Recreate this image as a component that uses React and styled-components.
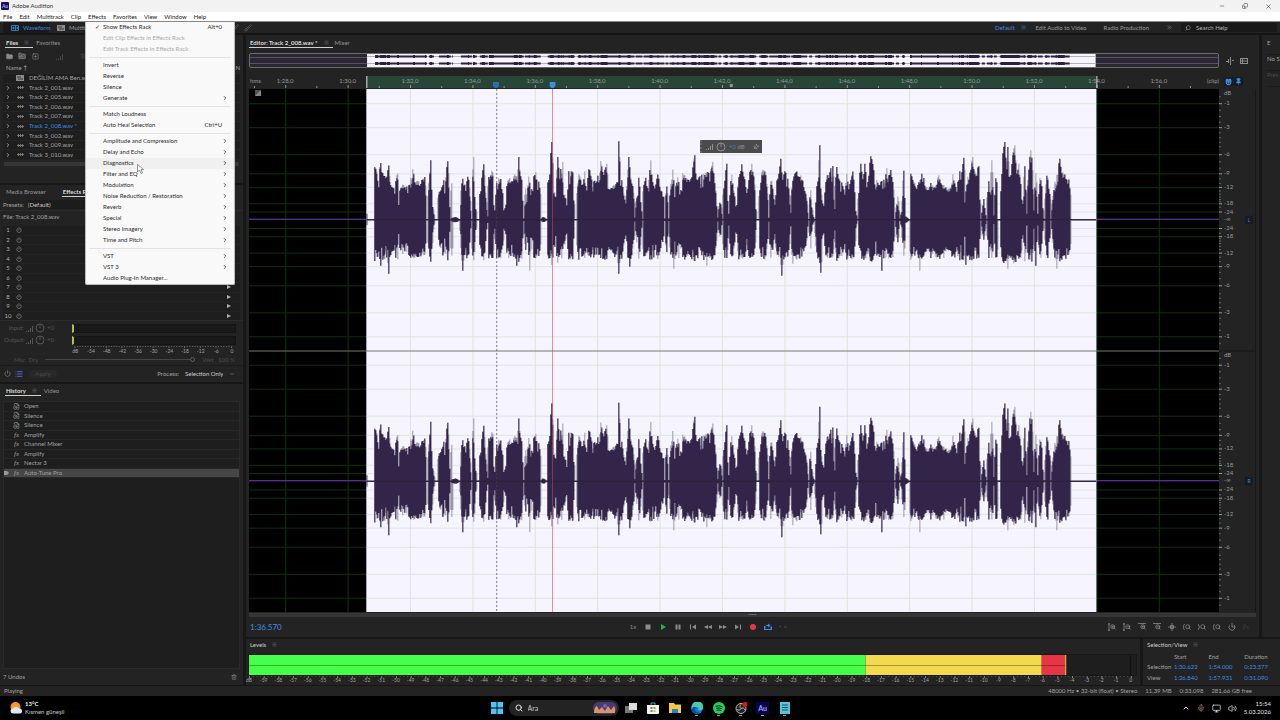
import React from 'react';
import styled, { createGlobalStyle, css } from 'styled-components';
import {
  Folder, FolderInput, SquarePlus, Trash2, ChevronRight, ChevronsRight, ChevronDown, ChevronUp, Power, List, Minus, X, Copy,
  Search, Magnet, Pin, ZoomIn, ZoomOut, Mic, Volume2, Monitor, Brush, FileClock, Menu as MenuIcon,
} from 'lucide-react';

const GlobalStyle = createGlobalStyle`
  * { box-sizing: border-box; }
  html, body { margin: 0; }
  body { background: #232323; font-family: Lato, "Open Sans", sans-serif; font-size: 6px; line-height: 8px; color: #a2a2a2; overflow: hidden; }
  button, input, select { font: inherit; color: inherit; background: none; border: 0; padding: 0; margin: 0; }
  ul, ol { list-style: none; margin: 0; padding: 0; }
  svg { display: block; flex: none; }
`;

/* ---------- frame ---------- */
const Page = styled.div`display: flex; flex-direction: column; height: 100vh; min-height: 640px;`;
const TitleBar = styled.header`display: flex; align-items: center; height: 12px; padding: 0 8px 0 1px; gap: 3px; background: #f2f2f2; color: #333;`;
const AppBadge = styled.span`width: 8px; height: 8px; border-radius: 1px; background: #15105c; color: #a9a4ff; font-size: 5px; font-weight: 700; text-align: center;`;
const WindowButtons = styled.div`display: flex; gap: 15px; margin-left: auto; color: #333;`;
const IconButton = styled.button`
  display: inline-flex; align-items: center; justify-content: center;
  width: ${p => p.$w || 8}px; height: 8px; color: ${p => p.$color || '#8c8c8c'};
  flex: none;
`;
const MenuBar = styled.nav`display: flex; align-items: center; height: 10px; padding: 0 3px; gap: 7px; background: #fff; color: #222; border-bottom: 1px solid #888;`;
const MenuTitle = styled.div`position: relative; height: 8px; button { display: block; height: 8px; }`;
const Popup = styled.ul`
  position: absolute; z-index: 5; top: 9px; left: -3px; width: 150px;
  background: #f9f9f9; border: 1px solid #bbb; border-top: 0; border-radius: 0 0 2px 2px; color: #2b2b2b;
`;
const MenuRow = styled.li`
  position: relative;
  button { display: flex; align-items: center; width: 100%; height: 11px; padding: 0 6px 0 17px; background: ${p => (p.$hot ? '#f0f0f0' : 'none')}; color: ${p => (p.$off ? '#a9a9a9' : 'inherit')}; }
`;
const Shortcut = styled.span`margin-left: auto; padding-right: 6px;`;
const Check = styled.span`width: 12px; margin-left: -12px;`;
const RowArrow = styled.span`margin-left: auto; color: #222;`;
const Separator = styled.li`height: 1px; margin: 2px 3px; background: #e2e2e2;`;
const Pointer = styled.svg`position: absolute; left: 51px; top: 6px; z-index: 1;`;

const Toolbar = styled.div`display: flex; align-items: center; height: 13px; padding: 0 3px 0 3px; background: #232323; border-bottom: 2px solid #151515;`;
const ModeButton = styled.button`display: flex; align-items: center; gap: 4px; height: 11px; width: ${p => p.$w}px; padding-left: 8px; color: ${p => (p.$on ? '#3d8ee0' : '#9a9a9a')}; background: ${p => (p.$on ? '#191919' : 'none')};`;
const BrushTools = styled.div`display: flex; gap: 5px; margin-left: 120px; opacity: .45;`;
const Workspaces = styled.div`display: flex; align-items: center; margin-left: auto;`;
const WorkspaceButton = styled.button`display: flex; align-items: center; gap: 6px; margin-right: ${p => p.$gap || 17}px; color: ${p => (p.$on ? '#3d8ee0' : '#9a9a9a')};`;
const SearchBox = styled.label`display: flex; align-items: center; gap: 5px; height: 9px; width: 96px; padding: 0 4px; background: #191919; color: #b5b5b5; input { width: 70px; outline: 0; } input::placeholder { color: #b5b5b5; opacity: 1; }`;

const Main = styled.main`display: flex; flex: 1; min-height: 0; background: #171717; gap: 3px;`;
const Side = styled.aside`display: flex; flex-direction: column; gap: 2px; width: 243px; flex: none;`;
const Panel = styled.section`display: flex; flex-direction: column; background: #232323; min-width: 0; ${p => (p.$h ? css`height: ${p.$h}px; flex: none;` : css`flex: 1; min-height: 0;`)}`;
const Tabs = styled.div`display: flex; height: ${p => p.$h || 15}px; padding: ${p => p.$top || 2}px 3px 0 ${p => p.$x || 3}px; flex: none;`;
const Tab = styled.button`
  display: flex; align-items: center; gap: 6px; height: 10px; margin-right: ${p => p.$gap || 6}px; padding: 0 4px 0 1px;
  color: ${p => (p.$on ? '#dcdcdc' : '#979797')}; font-weight: ${p => (p.$on ? 700 : 400)};
  border-bottom: 1px solid ${p => (p.$on ? '#d0d0d0' : 'transparent')};
`;
const PlainTab = styled(Tab)`color: #cfcfcf;`;
const Work = styled.div`display: flex; flex-direction: column; gap: 2px; flex: 1; min-width: 0;`;
const WorkRow = styled.div`display: flex; gap: 3px; ${p => (p.$h ? css`height: ${p.$h}px; flex: none;` : css`flex: 1; min-height: 0;`)}`;

/* ---------- files ---------- */
const FileTools = styled.div`display: flex; align-items: center; height: 12px; padding: 0 5px; gap: 5px;`;
const FileHeader = styled.div`display: flex; justify-content: space-between; height: 11px; padding: 2px 3px 0 6px;`;
const EvenList = styled.ul`display: grid; grid-auto-rows: 1fr; height: ${p => p.$h}px; margin: 0 3px; flex: none; background: #1e1e1e;`;
const FileRow = styled.li`display: flex; align-items: center; gap: 5px; padding-left: 2px; border-top: 1px solid #262626; color: ${p => (p.$on ? '#3d8ee0' : '#a2a2a2')};`;
const Slot = styled.span`display: inline-flex; justify-content: center; width: ${p => p.$w || 8}px; flex: none;`;
const ScrollBar = styled.div`height: 4px; margin: 3px 4px; background: #363636;`;

/* ---------- rack ---------- */
const Field = styled.label`display: flex; align-items: center; gap: 4px; height: 11px; padding: 0 3px; select { appearance: none; width: 190px; height: 9px; color: #c9c9c9; background: #1c1c1c; outline: 0; }`;
const FileLine = styled.div`height: 15px; padding: 2px 3px 0; border-top: 1px solid #2c2c2c;`;
const RackRow = styled.li`display: flex; align-items: center; gap: 4px; padding: 0 9px 0 1px; border-top: 1px solid #232323; color: #b0b0b0;`;
const RackArrow = styled.svg`margin-left: auto;`;
const RackMeters = styled.div`padding-top: 1px; border-top: 1px solid #2c2c2c;`;
const RackIO = styled.div`display: flex; align-items: center; gap: 2px; height: 12px; padding: 0 7px 0 4px; color: #555;`;
const IOLabel = styled.span`width: 20px; text-align: right;`;
const IOMeter = styled.span`height: 9px; width: 164px; margin-left: auto; background: #191919; border: 1px solid #141414; border-left: 2px solid #b2c043;`;
const MixRow = styled.label`
  display: flex; align-items: center; gap: 7px; height: 12px; padding: 0 8px 0 14px; color: #4e4e4e; border-bottom: 1px solid #1b1b1b;
  input { appearance: none; flex: 1; height: 1px; background: #454545; margin: 0; }
  input::-webkit-slider-thumb { appearance: none; width: 5px; height: 5px; border: 1px solid #5e5e5e; border-radius: 50%; background: #232323; }
`;
const RackFooter = styled.div`display: flex; align-items: center; gap: 4px; height: 15px; padding: 0 8px 0 3px; > label { display: flex; align-items: center; gap: 6px; margin-left: auto; } select { appearance: none; width: 38px; color: #cfcfcf; outline: 0; }`;
const ApplyButton = styled.button`width: 28px; height: 8px; border-radius: 4px; background: #282828; color: #4a4a4a; margin-left: 2px;`;

/* ---------- history ---------- */
const HistoryBox = styled.div`flex: 1; min-height: 0; margin: 0 3px; background: #1e1e1e; border: 1px solid #2a2a2a;`;
const HistoryList = styled.ol`display: grid; grid-auto-rows: 1fr; height: 76px;`;
const HistoryRow = styled.li`display: flex; align-items: center; gap: 4px; border-bottom: 1px solid #272727; background: ${p => (p.$on ? '#464646' : 'none')}; color: #a2a2a2; i { font-family: "Liberation Serif", serif; font-size: 7px; }`;
const HistoryFooter = styled.div`display: flex; align-items: center; justify-content: space-between; height: 16px; padding: 0 5px 0 3px;`;

/* ---------- editor ---------- */
const EditorGrid = styled.div`
  display: grid; flex: 1; min-height: 0; padding: 4px 3px 0 3px;
  grid-template-columns: minmax(0, 1fr) 37px;
  grid-template-rows: 15px 21px minmax(0, 1fr) 5px;
`;
const Overview = styled.div`border: 1px solid #6b6b6b; border-radius: 2px; background: #29282c; > svg { width: 100%; height: 13px; }`;
const OverviewTools = styled.div`display: flex; align-items: center; gap: 6px; padding-left: 7px;`;
const Ruler = styled.svg`width: 100%; height: 21px; font-size: 6px; fill: #989898;`;
const RulerTools = styled.div`display: flex; align-items: end; gap: 1px; padding: 0 4px 3px 5px; button { background: #171c22; height: 9px; }`;
const Stage = styled.div`position: relative; min-height: 0; > svg { width: 100%; height: 100%; }`;
const Scale = styled.svg`width: 100%; height: 100%; font-size: 6px; fill: #9a9a9a; border-right: 1px solid #171717;`;
const Hud = styled.div`position: absolute; top: 51px; left: 46.5%; display: flex; align-items: center; gap: 3px; width: 62px; height: 13px; padding: 0 3px 0 4px; background: #4b4b4b; border-left: 2px dotted #666; color: #8f8f8f; b { color: #3f83c2; font-weight: 400; }`;
const HudPin = styled.span`margin-left: auto; color: #c4c4c4; svg { transform: rotate(45deg); }`;
const TimeScroll = styled.div`grid-column: 1 / -1; margin-top: 1px; background: #363636; color: #a5a5a5; text-align: center; line-height: 2px;`;
const Transport = styled.div`display: flex; align-items: center; height: 20px; flex: none; padding: 0 8px 0 4px;`;
const Clock = styled.output`width: 379px; color: #3d8ee0; font-size: 8px; line-height: 12px;`;
const Buttons = styled.div`display: flex; gap: 7px;`;
const ZoomButtons = styled(Buttons)`margin-left: auto;`;
const NarrowPanel = styled(Panel)`
  flex: 0 0 18px; overflow: hidden; white-space: nowrap; padding: 4px 0 0 5px;
`;
const NarrowLine = styled.div`height: 16px; border-bottom: 1px solid #1b1b1b; color: ${p => (p.$dim ? '#4a4a4a' : '#a2a2a2')};`;

/* ---------- levels ---------- */
const LevelsPanel = styled(Panel)`padding-bottom: 2px;`;
const Meter = styled.div`margin: 0 3px 0 2px; height: 22px; flex: none; background: #1e1e1e; border: 1px solid #171717; svg { width: 100%; height: 100%; }`;
const MeterAxis = styled.div`margin-right: 3px; padding-left: 3px; height: 9px; flex: none; svg { width: 100%; height: 9px; overflow: visible; }`;
const SelectionPanel = styled(Panel)`flex: 0 0 137px;`;
const SelectionTable = styled.table`
  margin: 0 12px 0 4px; border-collapse: collapse; table-layout: fixed; height: 31px;
  th, td { padding: 0; font-weight: 400; text-align: left; }
  td { color: #3d8ee0; }
`;

/* ---------- bottom ---------- */
const StatusBar = styled.footer`display: flex; align-items: center; height: 11px; flex: none; padding: 0 28px 0 4px; gap: 8px; border-top: 1px solid #171717; span:nth-child(2) { margin-left: auto; }`;
const Taskbar = styled.div`display: grid; grid-template-columns: 1fr auto 1fr; align-items: center; height: 24px; flex: none; padding: 0 9px 0 10px; background: #000; color: #e6e6e6;`;
const Weather = styled.div`display: flex; align-items: center; gap: 3px; color: #c8c8c8; b { display: block; color: #eee; }`;
const Apps = styled.div`display: flex; align-items: center; gap: 8px;`;
const AppButton = styled.button`display: flex; flex-direction: column; align-items: center; justify-content: center; width: 14px; height: 20px; padding-top: 1px; &::after { content: ''; width: ${p => (p.$dot ? 3 : 0)}px; height: 1px; margin-top: 1px; background: ${p => p.$dot}; }`;
const TaskSearch = styled.label`display: flex; align-items: center; gap: 5px; width: 110px; height: 16px; margin: 0 -3px; padding: 0 2px 0 6px; border-radius: 8px; background: #232323; font-size: 7px; input { flex: 1; min-width: 0; outline: 0; } input::placeholder { color: #c8c8c8; opacity: 1; }`;
const AuIcon = styled.span`width: 13px; height: 12px; background: #07064a; color: #a5a0ff; font-size: 7px; line-height: 12px; font-weight: 700; text-align: center;`;
const Tray = styled.div`display: flex; align-items: center; justify-content: flex-end; gap: 7px; text-align: right;`;

/* ---------- audio data ---------- */
const CENTER = 268;
const partA = '0,250 2,250 3,268 22,268 24,105 30,115 36,165 42,98 48,130 54,135 60,140 67,105 70,150 78,170 84,165 94,130 96,165 98,222 101,170 110,165 118,170 130,160 140,110 146,150 155,145 160,165 174,135 178,180 182,268 185,268 186,210 192,90 198,200 204,268 213,268 217,180 225,175 232,150 235,185 243,93 249,190 252,268 256,155 260,262 268,260 274,262 280,268 286,170 289,110 292,160 300,150 306,140 311,200 315,266 317,190 322,80 327,220 331,266 338,266 340,160 345,150 351,105 356,170 360,225 364,258 366,150 372,125 379,120 382,220 386,240 390,120 392,155 400,140 408,150 412,240 418,230 422,155 430,145 438,155 446,130 452,140 457,80 461,130 466,140 472,264 475,240 478,140 482,200 488,130 494,190 498,165 502,140 508,125 514,150 520,160 524,266 530,260 536,262 541,268 544,155 550,145 555,35 558,60 563,190 570,170 575,80 580,140 588,95 592,170 598,200 602,225 607,120 613,125 620,120 624,266 630,268 633,264 635,130 642,140 648,165 655,125 660,180 668,110 675,140 680,150 690,155 704,92 712,130 720,100 725,175 735,170 745,165 756,150 758,33 762,130 768,160 774,205 780,200 788,80 793,150 800,160 806,262 812,190 818,140 823,190 828,266 832,165 840,130 846,180 852,90 858,150 866,170 875,130 882,180 892,180 895,264 902,130 906,264 912,170 920,110 925,180 935,140 945,185 950,120 960,150 970,150 976,140 984,75 990,150 1000,140 1010,135 1020,130 1030,120 1040,95 1048,180 1054,262 1062,205';
const partB = '6,266 10,180 18,100 24,250 30,170 34,125 40,180 48,225 54,150 64,105 72,140 80,190 88,120 95,100 102,150 108,266 114,266 118,150 122,115 132,120 138,140 146,262 150,150 156,150 162,225 168,150 176,130 182,85 186,150 194,120 204,145 210,248 216,150 228,125 246,140 252,180 258,190 264,266 270,180 276,250 283,266 290,160 296,140 299,45 302,200 310,226 318,130 324,140 330,120 336,110 342,235 348,110 356,150 366,160 374,190 380,130 384,170 392,150 396,125 402,150 406,240 412,266 418,130 422,100 428,150 434,100 440,170 446,130 450,78 456,90 460,120 468,150 478,165 486,145 492,140 500,110 504,130 512,120 518,155 524,266 532,200 538,264 546,240 550,120 556,258 562,262 568,268 571,130 580,150 590,175 598,150 608,118 614,170 622,175 630,160 640,170 650,155 656,130 662,160 672,165 680,175 694,165 698,135 706,170 710,185 716,105 722,150 730,82 734,215 740,130 746,145 752,110 756,80 762,120 768,130 774,110 778,200 782,266 790,205 798,266 804,150 810,190 815,90 820,255 828,120 832,266 838,266 842,170 848,60 854,35 858,110 862,50 866,140 872,130 878,60 884,45 888,130 894,100 900,150 908,220 914,110 919,250 924,130 930,60 936,90 940,240 946,120 952,250 958,140 964,160 970,264 974,266 978,140 986,140 992,266 1000,180 1004,145 1010,130 1018,85 1024,130 1034,130 1042,160 1048,140 1050,266 1070,268 1200,268';
const read = (s, dx) => s.split(' ').map(p => { const [x, y] = p.split(',').map(Number); return [(x + dx) / 3, (CENTER - y) / 3]; });
const envelope = [...read(partA, 0), ...read(partB, 1062)];
const dips = { 14: 46, 22: 54, 96: 51, 150: 46, 163: 51, 252: 54, 263: 47, 307: 49, 340: 46, 415: 56, 454: 53, 426: 44, 515: 51, 553: 51, 599: 45, 641: 49, 669: 46, 690: 49 };
const noise = i => { const v = Math.sin(i * 12.9898) * 43758.5453; return v - Math.floor(v); };

const samples = Array.from({ length: 730 }, (_, i) => {
  const k = Math.max(1, envelope.findIndex(([x]) => x > i + 0.5));
  const [x0, a0] = envelope[k - 1];
  const [x1, a1] = envelope[k] || envelope[k - 1];
  const mid = a0 + ((a1 - a0) * (i + 0.5 - x0)) / (x1 - x0 || 1);
  let top = mid;
  envelope.forEach(([x, a], n) => {
    if (x < i || x >= i + 1 || !n || n === envelope.length - 1) return;
    const before = envelope[n - 1][1];
    const after = envelope[n + 1][1];
    if ((a > before && a > after) || (a <= before && a <= after)) top = a;
  });
  const solid = i > 560 && i < 590;
  if (top > 10 && top < 55) {
    top *= 0.93 + noise(i) * 0.1;
    if (!solid && noise(i + 400) > 0.88) top *= 0.76;
  }
  let low = top < 34 ? top * 0.97 : 33 + (top - 34) * 0.18 + noise(i + 900) * 5;
  if (!solid && top > 20 && noise(i + 300) > 0.88) low *= 0.74;
  if (dips[i]) low = dips[i];
  return [Math.max(0.4, top), Math.max(0.4, low)];
});
const trace = body => {
  const pick = (i, c) => {
    const v = samples[i][c];
    const near = Math.max(samples[Math.max(0, i - 1)][c], samples[Math.min(729, i + 1)][c]);
    if (!body) return noise(i * 7 + c) > 0.5 ? Math.max(v, near * 0.8) : v;
    return noise(i * 3 + c) > 0.6 ? Math.min(v, near * 0.9) : v;
  };
  let d = 'M0 130.5';
  samples.forEach((_, i) => { d += `V${(130.5 - pick(i, 0)).toFixed(1)}H${i + 1}`; });
  for (let i = 729; i >= 0; i -= 1) d += `V${(130.5 + pick(i, 1)).toFixed(1)}H${i}`;
  return `${d}Z`;
};
const peakPath = trace(false);
const bodyPath = trace(true);
const miniPath = samples.map(([a], i) => {
  if (a < 8) return '';
  const h = a > 42 ? 3 : 2;
  return `M${i} ${h === 3 ? 0 : 0.5}v${h}h1v-${h}z`;
}).join('');

/* ---------- view geometry ---------- */
const VIEW = { start: 86.84, length: 31.09 };
const at = t => `${((t - VIEW.start) / VIEW.length) * 100}%`;
const SEL = [90.6, 114];
const selWidth = `${((SEL[1] - SEL[0]) / VIEW.length) * 100}%`;
const seconds = Array.from({ length: 31 }, (_, i) => 87 + i);
const evenSeconds = seconds.filter(t => t % 2 === 0);
const dbMarks = [1, 3, 6, 9, 12, 18, 24];
const dbLines = [0, 1].flatMap(ch => dbMarks.flatMap(db => {
  const a = 10 ** (-db / 20) * 25;
  return [[ch * 50 + 25 - a, db], [ch * 50 + 25 + a, db]];
}));
const minorDb = [0.5, 1.5, 2, 2.5, 3.5, 4, 4.5, 5, 7, 8, 10, 11, 13, 14, 15, 16, 17, 20];

/* ---------- small drawings ---------- */
const Grip = () => <MenuIcon size={5} color="#777" />;
const Wave = () => <svg width="8" height="7" viewBox="0 0 8 7" fill="#777"><path d="M1 3h7v1H1zM2 2h1v3H2zM4 2h1v3H4zM6 2h1v3H6z" /></svg>;
const WaveMode = () => <svg width="8" height="8" viewBox="0 0 8 8" fill="none" stroke="currentColor"><path d="M.5 1.500h7v5h-7zM0 4h8M2.500 2.500v3M4.500 1.500v5M6.500 3v2" strokeWidth=".8" /></svg>;
const TrackMode = () => <svg width="8" height="8" viewBox="0 0 8 8"><path d="M0 1h8v6H0z" fill="#8c8c8c" /><path d="M1 3h4M2 5h5" stroke="#232323" strokeWidth=".8" /></svg>;
const Knob = () => (
  <svg width="10" height="10" viewBox="0 0 10 10" fill="none" stroke="currentColor"><circle cx="5" cy="5" r="4" /><path d="M5 1V5" /></svg>
);
const Bars = () => <svg width="7" height="7" viewBox="0 0 7 7" fill="currentColor"><path d="M0 6h1v1H0zM2 5h1v2H2zM4 3h1v4H4zM6 1h1v6H6z" /></svg>;
const Shape = ({ d, fill = '#8c8c8c' }) => <svg width="8" height="8" viewBox="0 0 8 8" fill={fill}><path d={d} /></svg>;

/* ---------- effects menu ---------- */
const menu = [
  ['Show Effects Rack', { check: true, key: 'Alt+0' }], ['Edit Clip Effects in Effects Rack', { off: true }], ['Edit Track Effects in Effects Rack', { off: true }], null,
  ['Invert'], ['Reverse'], ['Silence'], ['Generate', { sub: true }], null,
  ['Match Loudness'], ['Auto Heal Selection', { key: 'Ctrl+U' }], null,
  ...['Amplitude and Compression', 'Delay and Echo', 'Diagnostics', 'Filter and EQ', 'Modulation', 'Noise Reduction / Restoration', 'Reverb', 'Special', 'Stereo Imagery', 'Time and Pitch'].map(t => [t, { sub: true }]), null,
  ['VST', { sub: true }], ['VST 3', { sub: true }], ['Audio Plug-In Manager...'],
];

function EffectsMenu() {
  return (
    <Popup>
      {menu.map((m, i) => {
        if (!m) return <Separator key={i} />;
        const [text, o = {}] = m;
        const hot = text === 'Diagnostics';
        return (
          <MenuRow key={text} $hot={hot} $off={o.off}>
            <button disabled={o.off}>
              {o.check && <Check>✓</Check>}{text}
              {o.key && <Shortcut>{o.key}</Shortcut>}
              {o.sub && <RowArrow><ChevronRight size={6} strokeWidth={3} /></RowArrow>}
            </button>
            {hot && <Pointer width="7" height="10" viewBox="0 0 14 20"><path d="M1 1v15l4-4 3 7 3-1-3-7h5z" fill="#fff" stroke="#333" /></Pointer>}
          </MenuRow>
        );
      })}
    </Popup>
  );
}

/* ---------- left panels ---------- */
const tracks = ['Track 2_001.wav', 'Track 2_005.wav', 'Track 2_006.wav', 'Track 2_007.wav', 'Track 2_008.wav *', 'Track 3_002.wav', 'Track 3_009.wav', 'Track 3_010.wav'];

function FilesPanel() {
  return (
    <Panel $h={148}>
      <Tabs $x={5} $top={3}><Tab $on $gap={2}>Files <Grip /></Tab><Tab>Favorites</Tab></Tabs>
      <FileTools>
        <IconButton aria-label="Open"><Folder size={7} fill="currentColor" /></IconButton>
        <IconButton aria-label="Import"><FolderInput size={8} fill="#555" /></IconButton>
        <IconButton aria-label="New"><SquarePlus size={7} /></IconButton>
        <IconButton aria-label="Insert" $w={30} $color="#444"><Bars /></IconButton>
        <IconButton aria-label="Delete" $color="#444"><Trash2 size={6} /></IconButton>
      </FileTools>
      <FileHeader><span>Name ↑</span><span>N</span></FileHeader>
      <EvenList $h={86}>
        <FileRow><Slot $w={6} /><Slot><TrackMode /></Slot>DEĞİLİM AMA Ben.sesx</FileRow>
        {tracks.map(t => (
          <FileRow key={t} $on={t.includes('008')}><Slot $w={6}><ChevronRight size={6} color="#bbb" strokeWidth={3} /></Slot><Slot><Wave /></Slot>{t}</FileRow>
        ))}
      </EvenList>
      <ScrollBar />
    </Panel>
  );
}

function RackPanel() {
  const marks = ['dB', -54, -48, -42, -36, -30, -24, -18, -12, -6, 0];
  return (
    <Panel $h={197}>
      <Tabs $h={14} $x={5}><Tab $gap={12}>Media Browser</Tab><Tab $on>Effects Rack <Grip /></Tab></Tabs>
      <Field>Presets: <select defaultValue="d"><option value="d">(Default)</option></select></Field>
      <FileLine>File: Track 2_008.wav</FileLine>
      <EvenList $h={95}>
        {Array.from({ length: 10 }, (_, i) => (
          <RackRow key={i}>
            <Slot>{i + 1}</Slot><Power size={6} />
            <RackArrow width="4" height="6" viewBox="0 0 4 6" fill="currentColor"><path d="M0 1l4 2-4 2z" /></RackArrow>
          </RackRow>
        ))}
      </EvenList>
      <RackMeters>
        <RackIO><IOLabel>Input:</IOLabel><Bars /><Knob />+0<IOMeter /></RackIO>
        <RackIO><IOLabel>Output:</IOLabel><Bars /><Knob />+0<IOMeter /></RackIO>
        <svg width="100%" height="8" fontSize="5" fill="#a2a2a2">
          {Array.from({ length: 61 }, (_, i) => <rect key={i} x={`${30.6 + i * 1.075}%`} width="1" height={i % 6 ? 1 : 2} fill="#666" />)}
          {marks.map((v, i) => <text key={v} x={`${31 + i * 6.45}%`} y="7" textAnchor="middle">{v}</text>)}
        </svg>
      </RackMeters>
      <MixRow>Mix:&nbsp; Dry <input type="range" defaultValue="100" aria-label="Mix" /> Wet &nbsp; 100 %</MixRow>
      <RackFooter>
        <IconButton aria-label="Power"><Power size={7} /></IconButton>
        <IconButton aria-label="List" $color="#5a62d8"><List size={8} strokeWidth={3} /></IconButton>
        <ApplyButton>Apply</ApplyButton>
        <label>Process: <select defaultValue="s"><option value="s">Selection Only</option></select><ChevronDown size={6} /></label>
      </RackFooter>
    </Panel>
  );
}

function HistoryPanel() {
  const rows = ['Open', 'Silence', 'Silence', 'Amplify', 'Channel Mixer', 'Amplify', 'Nectar 3', 'Auto-Tune Pro'];
  return (
    <Panel>
      <Tabs $h={17} $x={5}><Tab $on $gap={2}>History <Grip /></Tab><Tab>Video</Tab></Tabs>
      <HistoryBox>
        <HistoryList>
          {rows.map((r, i) => (
            <HistoryRow key={i} $on={i === 7}>
              <Slot $w={5}>{i === 7 && <svg width="5" height="6" viewBox="0 0 5 6"><path d="M0 1h3l2 2-2 2H0z" fill="#999" /></svg>}</Slot>
              <Slot $w={7}>{i < 3 ? <FileClock size={7} /> : <i>fx</i>}</Slot>{r}
            </HistoryRow>
          ))}
        </HistoryList>
      </HistoryBox>
      <HistoryFooter>7 Undos<IconButton aria-label="Clear history"><Trash2 size={6} /></IconButton></HistoryFooter>
    </Panel>
  );
}

/* ---------- editor parts ---------- */
function OverviewStrip() {
  return (
    <Overview>
      <svg>
        {[3, 9].map(y => <rect key={y} y={y} width="100%" height="1" fill="#5b4a80" />)}
        <rect x={at(SEL[0])} width={selWidth} height="100%" fill="#f7f5fc" />
        {[1, 8].map(y => (
          <svg key={y} x={at(SEL[0])} y={y} width={selWidth} height="3" viewBox="0 0 730 3" preserveAspectRatio="none">
            <path d="M0 1h730v1H0z" fill="#b5afc2" /><path d={miniPath} fill="#2b2040" />
          </svg>
        ))}
      </svg>
    </Overview>
  );
}

function TimeRuler() {
  return (
    <Ruler>
      <rect x={at(SEL[0])} y="8" width={selWidth} height="12" fill="#284638" />
      <text x="1" y="15">hms</text>
      {seconds.map(t => (
        <React.Fragment key={t}>
          <rect x={at(t)} y={t % 2 ? 18 : 17} width="1" height={t % 2 ? 2 : 3} />
          {t % 2 === 0 && <text x={at(t)} y="15" textAnchor="middle">{`1:${t - 60},0`}</text>}
        </React.Fragment>
      ))}
      <text x="100%" y="15" textAnchor="end">(clip)</text>
      <rect x={at(SEL[0])} y="8" width="1" height="12" fill="#ddd" />
      <rect x={at(SEL[1])} y="8" width="1" height="12" fill="#ddd" />
      <rect x={at(102.25)} y="16" width="3" height="3" fill="#8a9a90" />
      {[[94.66, '#2f6fae'], [96.47, '#3d8ee0']].map(([t, c]) => (
        <svg key={t} x={at(t)} y="14" width="7" height="7" viewBox="0 0 7 7"><path d="M0 0h6v4L4 6H2L0 4z" fill={c} /></svg>
      ))}
    </Ruler>
  );
}

function WaveStage() {
  return (
    <Stage>
      <svg>
        <rect width="100%" height="100%" fill="#000" />
        {evenSeconds.map(t => <rect key={t} x={at(t)} width="1" height="100%" fill="#0e3513" />)}
        {dbLines.map(([y], i) => <rect key={i} y={`${y}%`} width="100%" height="1" fill="#0c3012" />)}
        {[25, 75].map(y => <rect key={y} y={`${y}%`} transform="translate(0 -1)" width="100%" height="1" fill="#6f42bd" />)}
        <rect x={at(SEL[0])} width={selWidth} height="100%" fill="#f6f4fe" />
        <svg x={at(SEL[0])} width={selWidth} height="100%">
          {dbLines.map(([y], i) => <rect key={i} y={`${y}%`} width="100%" height="1" fill="#e0e6e0" />)}
        </svg>
        {evenSeconds.filter(t => t > SEL[0] && t < SEL[1]).map(t => <rect key={t} x={at(t)} width="1" height="100%" fill="#dee5dc" />)}
        {['0', '50%'].map(y => (
          <svg key={y} x={at(SEL[0])} y={y} width={selWidth} height="50%" viewBox="0 0 730 261" preserveAspectRatio="none">
            <path d={peakPath} fill="#9a96a8" />
            <path d={bodyPath} fill="#33244a" />
            <path d="M0 130h730v1H0z" fill="#2a2036" />
          </svg>
        ))}
        <rect y="50%" width="100%" height="1" fill="#777" />
        <line x1={at(94.78)} x2={at(94.78)} y2="100%" stroke="#444" strokeOpacity=".7" strokeDasharray="2 2" />
        <line x1={at(96.57)} x2={at(96.57)} y2="100%" stroke="#c14b64" strokeOpacity=".6" />
        <svg x="6" y="1" width="6" height="6"><path d="M0 0h6v6H0z" fill="#555" /><path d="M0 6L6 0v6z" fill="#888" /></svg>
      </svg>
      <Hud><Bars /><Knob /><span><b>+0</b> dB</span><HudPin><Pin size={6} /></HudPin></Hud>
    </Stage>
  );
}

function DbScale() {
  return (
    <Scale>
      {[0, 50].map(base => (
        <React.Fragment key={base}>
          <text x="5" y={`${base + 1}%`} dy="1">dB</text>
          <text x="5" y={`${base + 25}%`} dy="1">-∞</text>
          {minorDb.flatMap(db => [-1, 1].map(s => (
            <rect key={`${db}${s}`} x="0" y={`${base + 25 + s * 25 * 10 ** (-db / 20)}%`} width="2" height="1" fill="#666" />
          )))}
          <rect x="28" y={`${base + 25}%`} width="8" height="8" transform="translate(-2 -4)" fill="#151b22" />
          <text x="30" y={`${base + 25}%`} dy="2" textAnchor="middle" fill="#3d8ee0" fontSize="5">{base ? 'R' : 'L'}</text>
        </React.Fragment>
      ))}
      {dbLines.map(([y, db], i) => (
        <React.Fragment key={i}><rect y={`${y}%`} width="3" height="1" /><text x="5" y={`${y}%`} dy="2">-{db}</text></React.Fragment>
      ))}
      <rect y="50%" width="100%" height="1" fill="#151515" />
    </Scale>
  );
}

const transport = [
  ['Stop', 'M1.500 1.500h5v5h-5z'], ['Play', 'M2 1l5 3-5 3z', '#23b14d'], ['Pause', 'M1.500 1.500h2v5h-2zM4.500 1.500h2v5h-2z'],
  ['Previous', 'M1 1.500h1v5H1zM7 1.500v5L3 4z'], ['Rewind', 'M4 2v4L0 4zM8 2v4L4 4z'], ['Forward', 'M0 2l4 2-4 2zM4 2l4 2-4 2z'],
  ['Next', 'M6 1.500h1v5H6zM1 1.500l4 2.500-4 2.500z'], ['Record', 'M4 1a3 3 0 1 1 0 6a3 3 0 1 1 0-6z', '#e0384c'],
  ['Loop', 'M0 3h2v-1h2V0.500l2.500 2-2.500 2V3H1.500v3h5V3.500H8V7H0z', '#3d8ee0'], ['Skip', 'M0 3.500l2-1v2zM5 3.500h3v1H5z', '#484848'],
];
const zooms = [
  ['Zoom in amplitude', ZoomIn, 'M1 0v8M0 1h2M0 7h2'], ['Zoom out amplitude', ZoomOut, 'M1 0v8M0 1h2M0 7h2'],
  ['Zoom in time', ZoomIn, 'M0 .5h8'], ['Zoom out time', ZoomOut, 'M0 .5h8'],
  ['Zoom full', null, 'M4 0v8M0 4h8M2.500 2.500h3v3h-3z'],
  ['Zoom in point', Search, 'M1.500 1L0 4l1.500 3'], ['Zoom out point', Search, 'M0 1l1.500 3L0 7'], ['Zoom selection', Search, 'M1.500 1L0 4l1.500 3'],
  ['Reset zoom', null, 'M1.500 2.500A3 3 0 1 0 6 2M4 0v4h3'], ['Toggle zoom', null, 'M1 1v6M2 2l4 4'],
];

function Editor() {
  return (
    <Panel>
      <Tabs $h={14} $top={3}><Tab $on $gap={1}>Editor: Track 2_008.wav * <Grip /></Tab><Tab>Mixer</Tab></Tabs>
      <EditorGrid>
        <OverviewStrip />
        <OverviewTools>
          <IconButton aria-label="Zoom navigator"><Shape d="M0 4h2V2h1v4H2V5H0zM4 0h1v8H4zM6 3h2v1H6z" /></IconButton>
          <IconButton aria-label="Layout"><Shape d="M0 1h8v1H0zM0 3.500h8v1H0zM0 6h8v1H0zM0 1h1v6H0zM2 1h1v6H2zM7 1h1v6H7z" /></IconButton>
        </OverviewTools>
        <TimeRuler />
        <RulerTools>
          <IconButton aria-label="Snap" $color="#3d8ee0" $w={9}><Magnet size={7} strokeWidth={4} style={{ transform: 'rotate(135deg)' }} /></IconButton>
          <IconButton aria-label="Marker" $color="#3d8ee0" $w={9}><Pin size={7} fill="currentColor" /></IconButton>
        </RulerTools>
        <WaveStage />
        <DbScale />
        <TimeScroll>·····</TimeScroll>
      </EditorGrid>
      <Transport>
        <Clock>1:36.570</Clock>
        <Buttons>
          <IconButton>1x</IconButton>
          {transport.map(([n, d, c]) => <IconButton key={n} aria-label={n}><Shape d={d} fill={c} /></IconButton>)}
        </Buttons>
        <ZoomButtons>
          {zooms.map(([name, Icon, d]) => (
            <IconButton key={name} aria-label={name} $color={name === 'Toggle zoom' ? '#3c3c3c' : '#8c8c8c'}>
              <svg width="8" height="8" viewBox="0 0 8 8" fill="none" stroke="currentColor" strokeWidth=".8">
                <path d={d} />{Icon && <Icon x="2" y="1" size={6} strokeWidth={3} />}
              </svg>
            </IconButton>
          ))}
        </ZoomButtons>
      </Transport>
    </Panel>
  );
}

function Levels() {
  const pct = db => `${((60 + db) / 60) * 99.3}%`;
  const bands = [[-60, -18, '#46ff4b'], [-18, -6, '#f2d94e'], [-6, -4.4, '#e63547']];
  return (
    <LevelsPanel>
      <Tabs $top={1}><PlainTab>Levels <Grip /></PlainTab></Tabs>
      <Meter>
        <svg>
          {bands.map(([a, b, c]) => <rect key={a} x={pct(a)} width={pct(b - a - 60)} height="100%" fill={c} />)}
          <rect y="10" width={pct(-4.4)} height="1" fill="#000" fillOpacity=".3" />
          <rect x={pct(-4.4)} width="1" height="100%" fill="#e8d54a" />
          <rect x={pct(0)} width="1" height="100%" fill="#111" />
        </svg>
      </Meter>
      <MeterAxis>
        <svg fill="#a2a2a2" fontSize="5">
          {Array.from({ length: 241 }, (_, i) => <rect key={i} x={pct(-60 + i / 4)} width="1" height={i % 4 ? 1 : 2} fill={i % 4 ? '#555' : '#888'} />)}
          {Array.from({ length: 61 }, (_, i) => <text key={i} x={pct(i - 60)} y="6" textAnchor="middle">{i ? i - 60 : 'dB'}</text>)}
        </svg>
      </MeterAxis>
    </LevelsPanel>
  );
}

function SelectionView() {
  return (
    <SelectionPanel>
      <Tabs $h={14} $top={1}><PlainTab>Selection/View <Grip /></PlainTab></Tabs>
      <SelectionTable>
        <colgroup><col width="27" /><col width="35" /><col width="36" /><col /></colgroup>
        <thead><tr><td /><th scope="col">Start</th><th scope="col">End</th><th scope="col">Duration</th></tr></thead>
        <tbody>
          <tr><th scope="row">Selection</th><td>1:30.622</td><td>1:54.000</td><td>0:23.377</td></tr>
          <tr><th scope="row">View</th><td>1:26.840</td><td>1:57.931</td><td>0:31.090</td></tr>
        </tbody>
      </SelectionTable>
    </SelectionPanel>
  );
}

/* ---------- taskbar ---------- */
const art = {
  start: <path fill="#4cc2f5" d="M0 0h5.600v5.600H0zM6.400 0H12v5.600H6.400zM0 6.400h5.600V12H0zM6.400 6.400H12V12H6.400z" />,
  tasks: <g><path d="M0 4h8v7H0z" fill="#777" /><path d="M4 1h8v7H4z" fill="#ddd" /></g>,
  store: <g><path d="M4 3V1h4v2" fill="none" stroke="#3ea6d8" /><path d="M0 3h12v8a1 1 0 0 1-1 1H1a1 1 0 0 1-1-1z" fill="#f4f4f4" /><path d="M3.500 5h2v2h-2z" fill="#e5532c" /><path d="M6.500 5h2v2h-2z" fill="#7cb82f" /><path d="M3.500 8h2v2h-2z" fill="#2f9be0" /><path d="M6.500 8h2v2h-2z" fill="#f5b921" /></g>,
  files: <g><path d="M0 1h5l1 1.500h6V11H0z" fill="#f7c948" /><path d="M3 7h6v4H3z" fill="#2c7fc9" /></g>,
  edge: <g><circle cx="6" cy="6" r="6" fill="#1877c9" /><path d="M1 3.500a5.500 5.500 0 0 1 11 2.500c0 2-3 3-5 2 1-2 0-3-2-3S2 7 2 9A6 6 0 0 1 1 3.500z" fill="#45c9b0" /><path d="M5 5.500c-2 1-1 5 3 5.500-4 2-8-1-7-4s3-2.500 4-1.500z" fill="#0c4d9e" /></g>,
  spotify: <g><circle cx="6" cy="6" r="6" fill="#27cf61" /><path d="M2.500 4.300q4-1.200 7 .5M3 6.300q3.500-.9 6 .5M3.500 8.200q2.800-.6 4.800.4" fill="none" stroke="#0a2a14" /></g>,
  obs: <g><circle cx="6" cy="6.500" r="5" fill="#222" stroke="#bbb" /><path d="M6 6.500a2.500 2.500 0 0 1 0-4M6 6.500a2.500 2.500 0 0 1 4 2M6 6.500a2.500 2.500 0 0 1-4 1" fill="none" stroke="#bbb" /><circle cx="10" cy="2.500" r="2.500" fill="#e01515" /></g>,
  notes: <g><path d="M1 0h10v12H1z" fill="#56c4dc" /><path d="M3 3h6M3 5.500h6M3 8h6" stroke="#17586b" /></g>,
};
const AppIcon = ({ kind }) => <svg width="12" height="12" viewBox="0 0 12 12">{art[kind]}</svg>;

export default function App() {
  return (
    <Page>
      <GlobalStyle />
      <TitleBar>
        <AppBadge>Au</AppBadge>Adobe Audition
        <WindowButtons>
          <IconButton aria-label="Minimize" $color="#333"><Minus size={6} /></IconButton>
          <IconButton aria-label="Restore" $color="#333"><Copy size={6} style={{ transform: 'scaleY(-1)' }} /></IconButton>
          <IconButton aria-label="Close" $color="#333"><X size={7} /></IconButton>
        </WindowButtons>
      </TitleBar>
      <MenuBar>
        {['File', 'Edit', 'Multitrack', 'Clip', 'Effects', 'Favorites', 'View', 'Window', 'Help'].map(t => (
          <MenuTitle key={t}><button>{t}</button>{t === 'Effects' && <EffectsMenu />}</MenuTitle>
        ))}
      </MenuBar>
      <Toolbar>
        <ModeButton $on $w={46}><WaveMode />Waveform</ModeButton>
        <ModeButton $w={62}><TrackMode />Multitrack</ModeButton>
        <BrushTools><Brush size={8} /><Brush size={8} /></BrushTools>
        <Workspaces>
          <WorkspaceButton $on $gap={10}>Default <MenuIcon size={5} /></WorkspaceButton>
          <WorkspaceButton>Edit Audio to Video</WorkspaceButton>
          <WorkspaceButton>Radio Production</WorkspaceButton>
          <WorkspaceButton $gap={8} aria-label="More workspaces"><ChevronsRight size={7} /></WorkspaceButton>
        </Workspaces>
        <SearchBox><Search size={6} style={{ transform: 'scaleX(-1)' }} /><input placeholder="Search Help" aria-label="Search Help" /></SearchBox>
      </Toolbar>
      <Main>
        <Side><FilesPanel /><RackPanel /><HistoryPanel /></Side>
        <Work>
          <WorkRow><Editor /><NarrowPanel><NarrowLine>E</NarrowLine><NarrowLine>No S</NarrowLine><NarrowLine $dim>Pres</NarrowLine></NarrowPanel></WorkRow>
          <WorkRow $h={46}><Levels /><SelectionView /></WorkRow>
        </Work>
      </Main>
      <StatusBar>
        <span>Playing</span><span>48000 Hz • 32-bit (float) • Stereo</span><span>11,39 MB</span><span>0:33.098</span><span>281,66 GB free</span>
      </StatusBar>
      <Taskbar>
        <Weather>
          <svg width="12" height="12" viewBox="0 0 12 12"><circle cx="5.500" cy="5" r="5" fill="#f59b25" /><path d="M3 11.500a2.500 2.500 0 0 1 0-5 3.500 3.500 0 0 1 6 0 2.500 2.500 0 0 1 1 5z" fill="#dfe8f7" /></svg>
          <span><b>13°C</b>Kısmen güneşli</span>
        </Weather>
        <Apps>
          <AppButton aria-label="Start"><AppIcon kind="start" /></AppButton>
          <TaskSearch>
            <Search size={8} strokeWidth={3} /><input placeholder="Ara" aria-label="Ara" />
            <svg width="24" height="14" viewBox="0 0 24 14"><rect y="1" width="24" height="12" rx="6" fill="#4a3a70" /><path d="M1 12q0-6 3-7l2 4 3-3 3 4 3-5 3 4 3-4q2 3 1 7z" fill="#d99468" /><circle cx="12" cy="5" r="2" fill="#6f63b8" /></svg>
          </TaskSearch>
          {['tasks', 'store', 'files'].map(k => <AppButton key={k} aria-label={k}><AppIcon kind={k} /></AppButton>)}
          {['edge', 'spotify', 'obs'].map(k => <AppButton $dot="#999" key={k} aria-label={k}><AppIcon kind={k} /></AppButton>)}
          <AppButton $dot="#e08a7a" aria-label="Audition"><AuIcon>Au</AuIcon></AppButton>
          <AppButton $dot="#999" aria-label="notes"><AppIcon kind="notes" /></AppButton>
        </Apps>
        <Tray>
          <ChevronUp size={8} strokeWidth={3} /><Mic size={8} color="#c98a6c" /><Monitor size={9} /><Volume2 size={9} />
          <span>15:54<br />5.03.2026</span>
        </Tray>
      </Taskbar>
    </Page>
  );
}
